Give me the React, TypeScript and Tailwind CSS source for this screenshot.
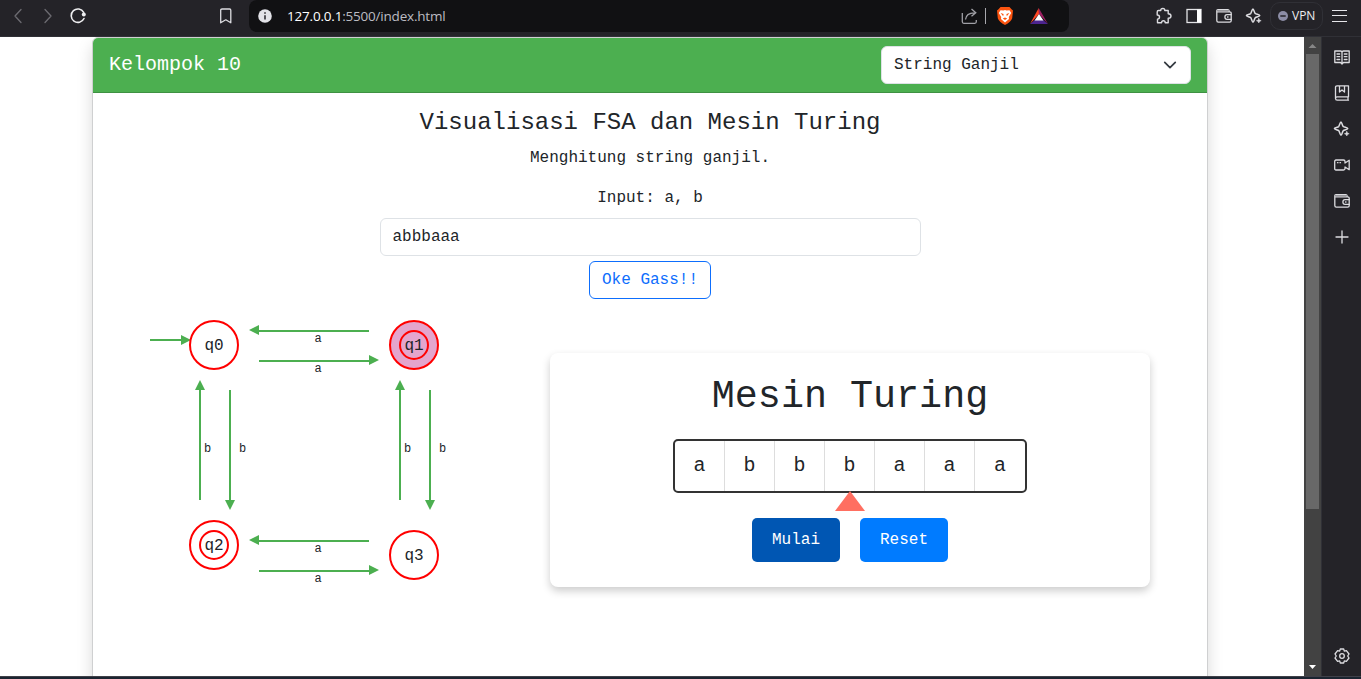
import React from "react";

const stroke = { fill: "none", stroke: "#dcdce0", strokeWidth: 1.3, strokeLinecap: "round", strokeLinejoin: "round" } as const;

function Sparkle() {
  return (
    <svg width="18" height="18" viewBox="0 0 18 18" {...stroke} strokeWidth="1.5">
      <path d="M8 2C8.9 2 9.2 5.8 10.3 6.5C11 7.2 14.8 7.7 14.8 8.6C14.8 9.5 11.2 9.7 10.3 10.6C9.3 11.5 9 15.2 8 15.2C7 15.2 6.6 11.6 5.7 10.6C4.8 9.7 1.4 9.5 1.4 8.6C1.4 7.7 4.8 7.5 5.7 6.6C6.6 5.6 7 2 8 2Z" />
      <path d="M13.8 11.4L14.5 13L16.2 13.7L14.5 14.4L13.8 16L13.1 14.4L11.4 13.7L13.1 13Z" fill="#dcdce0" strokeWidth="0.5" />
    </svg>
  );
}

function Wallet() {
  return (
    <svg width="18" height="18" viewBox="0 0 18 18" {...stroke}>
      <path d="M14 4.8V3.5Q14 2.6 12.9 2.6H3Q1.8 2.6 1.8 4V13.5Q1.8 15.2 3.3 15.2H14.7Q16.2 15.2 16.2 13.8V6.3Q16.2 4.8 14.7 4.8H2" />
      <path d="M16.2 7.7H12Q9.9 7.7 9.9 10T12 12.3H16.2M12.6 10H13" />
      <path d="M2.4 3.7H13.5" stroke="#96969b" />
    </svg>
  );
}

function Chrome() {
  return (
    <header className="flex h-[37px] shrink-0 border-b border-[#303036] bg-[#242328] pl-2">
      <div className="flex h-8 w-[241px] items-center">
        <svg width="80" height="32" viewBox="0 0 80 32" {...stroke}>
          <path d="M13 9.5L7 16L13 22.5M37 9.5L43 16L37 22.5" stroke="#6c6b71" />
          <path d="M75.7 12.3A6.7 6.7 0 1 0 76 18.5" stroke="#eeeef0" strokeWidth="1.6" />
          <circle cx="75.8" cy="14.5" r="2" fill="#eeeef0" stroke="none" />
        </svg>
        <svg className="ml-[129px]" width="18" height="18" viewBox="0 0 18 18" {...stroke}>
          <path d="M3.7 3.2Q3.7 2 5 2H12.6Q13.8 2 13.8 3.2V15.8L8.8 12.8L3.7 15.8Z" />
        </svg>
      </div>
      <div className="flex h-8 w-[820px] items-center rounded-lg bg-[#111113]">
        <svg className="ml-[9px]" width="14" height="14" viewBox="0 0 14 14">
          <circle cx="7" cy="7" r="6.8" fill="#e3e3e8" />
          <path d="M7 6.2V10.5M7 3.3V4.7" stroke="#242328" strokeWidth="1.5" />
        </svg>
        <span className="ml-[15px] w-[158px] whitespace-nowrap font-['Open_Sans','Noto_Sans',sans-serif] text-[13.5px] leading-5 tracking-[-0.2px] text-[#bcbcc2]">
          <span className="text-white">127.0.0.1</span>:5500/index.html
        </span>
        <svg className="ml-[515px]" width="96" height="32" viewBox="0 0 96 32">
          <g fill="none" stroke="#a0a0a6" strokeWidth="1.3">
            <path d="M2.3 13V21.8Q2.3 23.3 3.8 23.3H14.8Q16.3 23.3 16.3 21.8V20M5.5 19.5C6 15 9 12.8 14.5 12.8M11.5 9L15.8 12.8L11.5 16.3" />
          </g>
          <path d="M25.5 8V24" stroke="#a8a8ae" />
          <path d="M40.5 7H49.5L51.5 9.3L53 10.5L52.2 18.2Q51 22 45 25Q39 22 37.8 18.2L37 10.5L38.5 9.3Z" fill="#fb5410" />
          <path d="M40.5 10.2L43.5 10.6L45 10L46.5 10.6L49.5 10.2L51.2 13L48.8 17L49 19L45 22.6L41 19L41.2 17L38.8 13Z" fill="#fff" />
          <path d="M40.6 13L43.6 14L43.2 16.2ZM49.4 13L46.4 14L46.8 16.2ZM42.8 18.5L45 17.6L47.2 18.5L45 19.9Z" fill="#fb5410" />
          <path d="M78.7 8L70 24L79 14Z" fill="#ff4724" />
          <path d="M78.7 8L88 24L79 14Z" fill="#9e1f63" />
          <path d="M70 24H88L83 20H75Z" fill="#4d248f" />
          <path d="M79 14L83.5 20.5H74.5Z" fill="#fff" />
        </svg>
      </div>
      <div className="ml-[86px] flex h-8 items-center">
        <svg width="18" height="18" viewBox="0 0 18 18" {...stroke} strokeWidth="1.4">
          <path d="M3.5 3.5H5.8Q5.6 1.5 7.8 1.5T9.8 3.5H13.2V6.8Q16 6.8 16 9T13.2 11.2V15.8H10.2Q10.2 13.8 8.4 13.8T6.6 15.8H2.5V12.2Q4.5 12 4.5 10T2.2 8V5Q2.2 3.5 3.5 3.5Z" />
        </svg>
        <svg className="ml-3" width="18" height="18" viewBox="0 0 18 18">
          <rect x="2" y="2.5" width="14" height="13" fill="none" stroke="#e3e3e6" strokeWidth="1.3" />
          <path d="M12 2.5H16V15.5H12Z" fill="#fff" />
        </svg>
        <span className="ml-3"><Wallet /></span>
        <span className="ml-3"><Sparkle /></span>
        <div className="ml-[7px] flex h-7 w-[53px] items-center rounded-[10px] border border-[#303036] pl-[7px]">
          <svg width="10" height="10" viewBox="0 0 10 10">
            <circle cx="5" cy="5" r="5" fill="#8c8da6" />
            <path d="M2.3 5H7.7" stroke="#242328" strokeWidth="1.5" />
          </svg>
          <span className="ml-1 font-['Open_Sans','Noto_Sans',sans-serif] text-[12px] leading-4 text-[#eeeef0]">VPN</span>
        </div>
        <svg className="ml-[7px]" width="18" height="18" viewBox="0 0 18 18">
          <path d="M2 3.5H17M2 8.5H17M2 14.5H17" stroke="#e6e6ea" />
        </svg>
      </div>
    </header>
  );
}

function Sidebar() {
  return (
    <aside className="flex w-10 shrink-0 flex-col items-center border-l border-[#303036] bg-[#242328] pt-[11px]">
      <div className="flex flex-col gap-[18px]">
        <svg width="18" height="18" viewBox="0 0 18 18" {...stroke}>
          <path d="M1.8 3H7.5Q9 3 9 4.5Q9 3 10.5 3H16.2V14.5H10.5L9 16L7.5 14.5H1.8ZM9 4.5V15.5M4 6H6.7M4 8.7H6.7M4 11.5H6.7M11.3 6H14M11.3 8.7H14M11.3 11.5H14" />
        </svg>
        <svg width="18" height="18" viewBox="0 0 18 18" {...stroke}>
          <path d="M15.5 12.8V1.8H4Q2.5 1.8 2.5 3.3V14.5Q2.5 16.2 4.2 16.2H15.5M15.5 12.8H4.2Q2.5 12.8 2.5 14.5M15 12.8V16M6.5 2V8L9 6L11.5 8V2" />
        </svg>
        <Sparkle />
        <svg width="18" height="18" viewBox="0 0 18 18" {...stroke}>
          <path d="M3 4H10.5Q12 4 12 5.5V7L16.2 4.3V13.7L12 11V12.5Q12 14 10.5 14H3Q1.7 14 1.7 12.5V5.5Q1.7 4 3 4ZM4.5 6.7H5M7 6.7H7.5" />
        </svg>
        <Wallet />
        <svg width="18" height="18" viewBox="0 0 18 18" {...stroke}>
          <path d="M9 3V15M3 9H15" />
        </svg>
      </div>
      <svg className="mb-[11px] mt-auto" width="18" height="18" viewBox="0 0 18 18" {...stroke}>
        <path d="M7.3 2H10.7L11.3 4.1L13.4 3.6L16 7L14.7 9L16 11L13.4 14.4L11.3 13.9L10.7 16H7.3L6.7 13.9L4.6 14.4L2 11L3.3 9L2 7L4.6 3.6L6.7 4.1Z" />
        <circle cx="9" cy="9" r="2.3" />
      </svg>
    </aside>
  );
}

function Scrollbar() {
  return (
    <div className="flex w-[17px] shrink-0 flex-col items-center bg-[#424242]">
      <svg width="17" height="17" viewBox="0 0 17 17"><path d="M4.5 11L8.5 7L12.5 11Z" fill="#868686" /></svg>
      <div className="h-[455px] w-[13px] bg-[#686868]" />
      <svg className="mt-auto" width="17" height="17" viewBox="0 0 17 17"><path d="M5 6H12L8.5 10Z" fill="#fff" /></svg>
    </div>
  );
}

const nodes = [
  { name: "q0", x: 214, y: 345, double: false, active: false },
  { name: "q1", x: 414, y: 345, double: true, active: true },
  { name: "q2", x: 214, y: 545, double: true, active: false },
  { name: "q3", x: 414, y: 555, double: false, active: false },
];

const edges = [
  { line: "M150 340H182", head: "M181 335L191 340L181 345Z" },
  { line: "M369 331H258", head: "M259 325L249 330L259 335Z" },
  { line: "M259 361H370", head: "M369 355L379 360L369 365Z" },
  { line: "M369 541H258", head: "M259 535L249 540L259 545Z" },
  { line: "M259 571H370", head: "M369 565L379 570L369 575Z" },
  { line: "M200 500V389", head: "M195 390L200 380L205 390Z" },
  { line: "M230 390V501", head: "M225 500L230 510L235 500Z" },
  { line: "M400 500V389", head: "M395 390L400 380L405 390Z" },
  { line: "M430 390V501", head: "M425 500L430 510L435 500Z" },
];

const edgeLabels = [
  { text: "a", x: 318, y: 342 },
  { text: "a", x: 318, y: 372 },
  { text: "a", x: 318, y: 552 },
  { text: "a", x: 318, y: 582 },
  { text: "b", x: 207.5, y: 452 },
  { text: "b", x: 242.5, y: 452 },
  { text: "b", x: 407.5, y: 452 },
  { text: "b", x: 442.5, y: 452 },
];

function Automaton() {
  return (
    <svg className="shrink-0" width="457" height="300" viewBox="93 299 457 300" fontFamily="'Liberation Mono', monospace" textAnchor="middle" fill="#212529">
      {edges.map((e) => (
        <g key={e.line}>
          <path d={e.line} stroke="#4caf50" strokeWidth="2" />
          <path d={e.head} fill="#4caf50" />
        </g>
      ))}
      {nodes.map((n) => (
        <g key={n.name}>
          <circle cx={n.x} cy={n.y} r="24" fill={n.active ? "#e4a5cd" : "#fff"} stroke="#f00" strokeWidth="2" />
          {n.double && <circle cx={n.x} cy={n.y} r="14" fill="none" stroke="#f00" strokeWidth="2" />}
          <text x={n.x} y={n.y + 5} fontSize="16">{n.name}</text>
        </g>
      ))}
      {edgeLabels.map((l) => (
        <text key={`${l.x}-${l.y}`} x={l.x} y={l.y} fontSize="12">{l.text}</text>
      ))}
    </svg>
  );
}

function TuringMachine() {
  return (
    <section className="mt-[54px] flex h-[234px] w-[600px] flex-col items-center rounded-lg bg-white shadow-[0_4px_8px_rgba(0,0,0,0.2)]">
      <h1 className="mt-[21px] text-[38.4px] leading-[46px]">Mesin Turing</h1>
      <div className="mt-[19px] flex h-[54px] rounded-[5px] border-2 border-[#333] text-[20px]">
        {"abbbaaa".split("").map((c, i) => (
          <div key={i} className="flex w-[50px] items-center justify-center border-r border-[#ddd] last:border-r-0">{c}</div>
        ))}
      </div>
      <svg className="-mt-0.5" width="30" height="20" viewBox="0 0 30 20"><path d="M15 0L30 20H0Z" fill="#ff6f61" /></svg>
      <div className="mt-[7px] flex gap-5 text-white">
        <button className="h-11 w-[88px] rounded-[5px] bg-[#0056b3]">Mulai</button>
        <button className="h-11 w-[88px] rounded-[5px] bg-[#007bff]">Reset</button>
      </div>
    </section>
  );
}

export default function App() {
  return (
    <div className="flex h-[679px] w-[1361px] flex-col overflow-hidden bg-white font-['Liberation_Mono',monospace] text-[16px] leading-6 text-[#212529]">
      <Chrome />
      <div className="flex min-h-0 flex-1">
        <main className="flex flex-1 justify-center overflow-hidden pl-[92px] pr-24">
          <div className="flex h-[700px] w-[1116px] shrink-0 flex-col rounded-t-[6px] border border-[#cfd0d1] bg-white shadow-[0_8px_16px_rgba(0,0,0,0.15)]">
            <div className="flex h-[55px] shrink-0 items-center justify-between rounded-t-[5px] border-b border-[#3e9142] bg-[#4caf50] px-4">
              <span className="text-[20px] text-white">Kelompok 10</span>
              <div className="flex h-[38px] w-[310px] items-center justify-between rounded-md border border-[#dee2e6] bg-white pl-3 pr-[13px]">
                <span>String Ganjil</span>
                <svg width="14" height="14" viewBox="0 0 16 16" fill="none" stroke="#343a40" strokeWidth="2" strokeLinecap="round" strokeLinejoin="round"><path d="M2 5L8 11L14 5" /></svg>
              </div>
            </div>
            <div className="flex flex-col items-center">
              <h5 className="mt-4 text-[24px] leading-7">Visualisasi FSA dan Mesin Turing</h5>
              <p className="mt-[9px]">Menghitung string ganjil.</p>
              <p className="mt-4">Input: a, b</p>
              <div className="mt-2 flex h-[38px] w-[541px] items-center rounded-md border border-[#dee2e6] px-3">abbbaaa</div>
              <button className="mt-[5px] h-[38px] w-[122px] rounded-md border border-[#0d6efd] text-[#0d6efd]">Oke Gass!!</button>
            </div>
            <div className="flex">
              <Automaton />
              <TuringMachine />
            </div>
          </div>
        </main>
        <Scrollbar />
        <Sidebar />
      </div>
      <div className="h-[3px] shrink-0 border-t border-[#404048] bg-[#1b2430]" />
    </div>
  );
}
